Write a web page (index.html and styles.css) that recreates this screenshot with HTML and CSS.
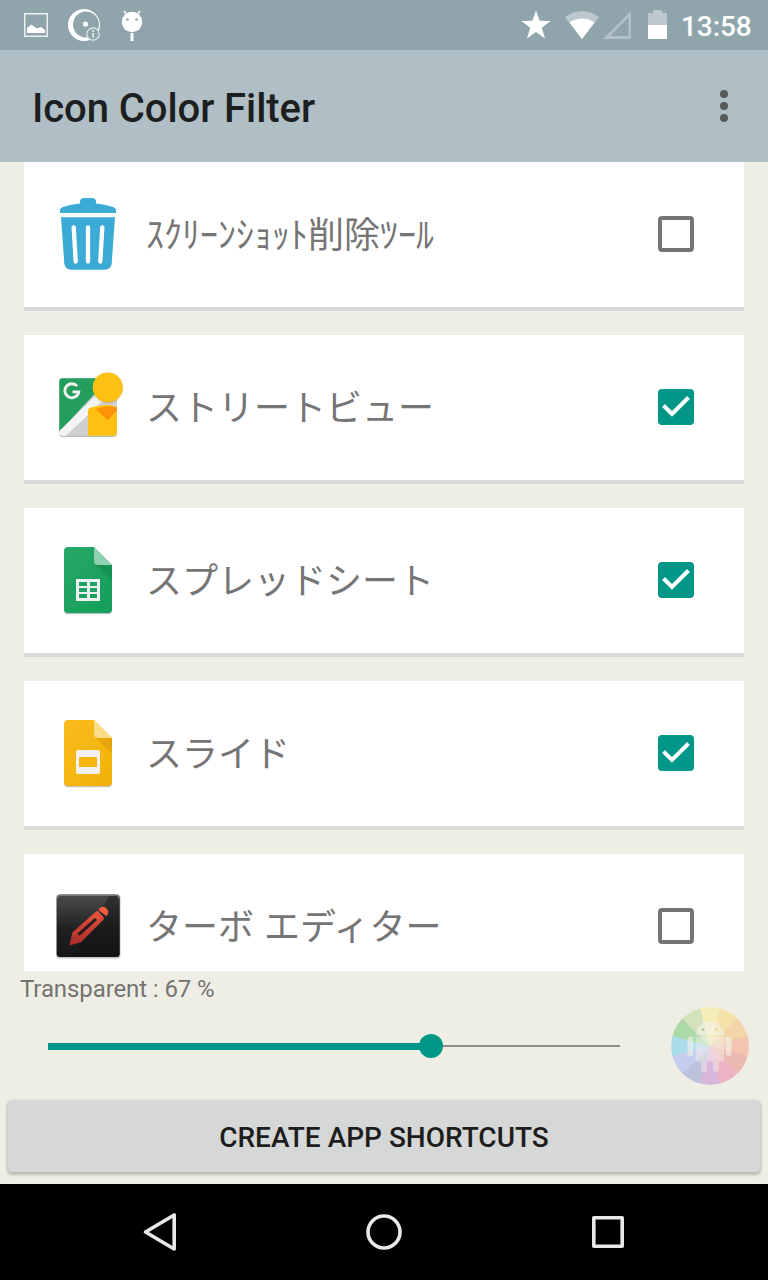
FILE: index.html
```html
<!DOCTYPE html>
<html lang="ja">
<head>
	<meta charset="utf-8"/>
	<title>Icon Color Filter</title>
	<link rel="stylesheet" href="styles.css">
</head>
<body>
	<div class="statusbar">
		<svg class="notifications" width="124" height="50" viewBox="24 0 124 50">
			<path d="M24.7 13.7h22.6v22.6H24.7z" fill="none" stroke="#eef1f2" stroke-width="1.5"/>
			<path d="M27 33v-5l4.500-3.500 4.500 3.500h2l3-1 4 3v3z" fill="#fff"/>
			<path fill-rule="evenodd" d="M84 9a16 16 0 1 0 0 32a16 16 0 1 0 0-32zM86 11.500a13 13 0 1 1 0 26a13 13 0 1 1 0-26z" fill="#fff"/>
			<circle cx="85.500" cy="24" r="2.600" fill="#fff"/>
			<circle cx="93" cy="34" r="6.200" fill="#90a4ac" stroke="#e3e8ea" stroke-width="1.200"/>
			<path d="M93 30v1.800M93 33v4.500" fill="none" stroke="#e3e8ea" stroke-width="1.800"/>
			<path d="M124 11l3 4M140 11l-3 4" stroke="#fff" stroke-width="1.500"/>
			<circle cx="132" cy="22" r="10.200" fill="#fff"/>
			<circle cx="127.500" cy="19.500" r="1.300" fill="#90a4ac"/>
			<circle cx="136.500" cy="19.500" r="1.300" fill="#90a4ac"/>
			<path d="M130.500 33h3v8h-3z" fill="#fff"/>
		</svg>
		<svg class="system" width="150" height="50" viewBox="520 0 150 50">
			<path d="M536 10.500l3.600 10.300 11.100.2-8.900 6.700 3.200 10.800-9-6.500-9 6.500 3.200-10.800-8.900-6.700 11.100-.2z" fill="#fff"/>
			<path d="M582 39L565 17q17-12 34 0z" fill="#bcc8cd"/>
			<path d="M582 39l-12.500-16.500q12.500-8 25 0z" fill="#fff"/>
			<path fill-rule="evenodd" d="M631 11v28h-28zM628.500 17.500L610 36h18.500z" fill="#b3c0c7"/>
			<path d="M653 10h9v3h5v12h-19V13h5z" fill="#bcc8cd"/>
			<path d="M648 25h19v14h-19z" fill="#fff"/>
		</svg>
		<span class="clock">13:58</span>
	</div>

	<div class="appbar">
		<h1>Icon Color Filter</h1>
		<svg width="8" height="32" viewBox="0 0 8 32" fill="#54595c">
			<circle cx="4" cy="4" r="4"/>
			<circle cx="4" cy="16" r="4"/>
			<circle cx="4" cy="28" r="4"/>
		</svg>
	</div>

	<div class="list">
		<div class="card">
			<svg class="icon" viewBox="0 0 72 72">
				<path d="M8 15v-3q0-2 3-3 8-3 17-3.500V4q0-4 4-4h8q4 0 4 4v1.500Q53 6 61 9q3 1 3 3v3z" fill="#3babd5"/>
				<path d="M9 19.300h54l-3.300 46q-.7 6.500-7.200 6.500h-33q-6.500 0-7.200-6.500z" fill="#3babd5"/>
				<path d="M21.700 29.500l2 34M36 29.500v34M50.300 29.500l-2 34" stroke="#fff" stroke-width="4.300" stroke-linecap="round"/>
			</svg>
			<span class="name">ｽｸﾘｰﾝｼｮｯﾄ削除ﾂｰﾙ</span>
			<span class="check"></span>
		</div>
		<div class="card">
			<svg class="icon" viewBox="0 0 72 72">
				<rect x="7.300" y="8.500" width="57.500" height="57.500" rx="3" fill="#bdbdbd"/>
				<rect x="7.300" y="7.300" width="57.500" height="57.500" rx="3" fill="#cfcfcf"/>
				<path d="M10.300 7.300H57L7.300 61V10.300q0-3 3-3z" fill="#239e5c"/>
				<path d="M51 17.500L7.300 60v2q0 2.800 3 2.800H14L57 24z" fill="#f3f3f3"/>
				<path d="M36 64.800V40q0-3 3-3.500 9-3 17-2.500 6 .5 8.800 2.500v25.300q0 3-3 3z" fill="#fec111"/>
				<path d="M43.500 38q12-4.500 21.300-1.500v3L56 49.300z" fill="#ff9209"/>
				<circle cx="56" cy="17" r="15.300" fill="#000" opacity=".15"/>
				<circle cx="55.700" cy="16.400" r="15" fill="#fec111"/>
				<path d="M25.200 15.200A7 7 0 1 0 26.800 20.800H20.500" fill="none" stroke="#f3f3f3" stroke-width="2.800"/>
			</svg>
			<span class="name">ストリートビュー</span>
			<span class="check checked"><svg viewBox="0 0 36 36"><path d="M5.500 16.500l8.500 8.500L30.500 8.500"/></svg></span>
		</div>
		<div class="card">
			<svg class="icon" viewBox="0 0 72 72">
				<defs>
					<linearGradient id="green" x1="0" y1="0" x2="1" y2="1">
						<stop offset="0" stop-color="#27a768"/>
						<stop offset="1" stop-color="#149e5b"/>
					</linearGradient>
				</defs>
				<rect x="12" y="30" width="48" height="40.200" rx="4" fill="#b9c5bf"/>
				<path d="M16 3h26l18 18v44q0 4-4 4H16q-4 0-4-4V7q0-4 4-4z" fill="url(#green)"/>
				<path d="M43.500 20.500L60 37V21z" fill="#138a50" opacity=".7"/>
				<path d="M42 3l18 18H46q-4 0-4-4z" fill="#8fd2b1"/>
				<path fill-rule="evenodd" d="M24 35h24v22H24zM27 38v4h8v-4zM38 38v4h7v-4zM27 44v4h8v-4zM38 44v4h7v-4zM27 50v4h8v-4zM38 50v4h7v-4z" fill="#f1f1f1"/>
			</svg>
			<span class="name">スプレッドシート</span>
			<span class="check checked"><svg viewBox="0 0 36 36"><path d="M5.500 16.500l8.500 8.500L30.500 8.500"/></svg></span>
		</div>
		<div class="card">
			<svg class="icon" viewBox="0 0 72 72">
				<defs>
					<linearGradient id="yellow" x1="0" y1="0" x2="1" y2="1">
						<stop offset="0" stop-color="#f8bc1d"/>
						<stop offset="1" stop-color="#f2b107"/>
					</linearGradient>
				</defs>
				<rect x="12" y="30" width="48" height="40.200" rx="4" fill="#c9c3b5"/>
				<path d="M16 3h26l18 18v44q0 4-4 4H16q-4 0-4-4V7q0-4 4-4z" fill="url(#yellow)"/>
				<path d="M43.500 20.500L60 37V21z" fill="#dd9c0a" opacity=".6"/>
				<path d="M42 3l18 18H46q-4 0-4-4z" fill="#fadc87"/>
				<path fill-rule="evenodd" d="M26 33h20q2 0 2 2v20q0 2-2 2H26q-2 0-2-2V35q0-2 2-2zM27 40v10h18V40z" fill="#f1f1f1"/>
			</svg>
			<span class="name">スライド</span>
			<span class="check checked"><svg viewBox="0 0 36 36"><path d="M5.500 16.500l8.500 8.500L30.500 8.500"/></svg></span>
		</div>
		<div class="card">
			<svg class="icon" viewBox="0 0 72 72">
				<defs>
					<linearGradient id="black" x1="0" y1="0" x2="0" y2="1">
						<stop offset="0" stop-color="#4b4c4e"/>
						<stop offset=".55" stop-color="#1f2021"/>
						<stop offset="1" stop-color="#151617"/>
					</linearGradient>
					<linearGradient id="red" x1="0" y1="0" x2="0" y2="1">
						<stop offset="0" stop-color="#e9553c"/>
						<stop offset="1" stop-color="#a82a2b"/>
					</linearGradient>
				</defs>
				<rect x="4" y="4.500" width="64.500" height="64" rx="4" fill="#c4c4c4"/>
				<rect x="4.700" y="4.500" width="63" height="62.500" rx="3.500" fill="url(#black)"/>
				<path d="M58 5h6.500q3 0 3 3v56q0 3-3 3H20z" fill="#111314" opacity=".45"/>
				<path d="M5.500 8.500q0-3.300 3.300-3.300h55q3.200 0 3.200 3.300" fill="none" stroke="#8b8c8e" stroke-width="1"/>
				<!-- pencil: body, slot, eraser -->
				<path d="M17.300 55.500l3-13L44 21.500q1.500-1.200 2.600.2l5 5.600q1 1.200-.2 2.500L29 52.300z" fill="url(#red)"/>
				<path d="M26.500 44.700L44 29" stroke="#241c1d" stroke-width="3"/>
				<path d="M47 18.500q3.500-3.300 7-.5 3.600 3 1.500 7-1 1.300-2.200.5l-6.300-5q-1-1 0-2z" fill="#f75b3e"/>
			</svg>
			<span class="name wide">ターボ エディター</span>
			<span class="check"></span>
		</div>
	</div>

	<div class="controls">
		<div class="opacity">
			<p class="label">Transparent : 67 %</p>
			<div class="slider">
				<div class="fill" style="width:67%"></div>
				<div class="thumb"></div>
				<div class="rest"></div>
			</div>
		</div>
		<div class="wheel">
			<svg viewBox="0 0 78 78">
				<circle class="glow" cx="39" cy="39" r="15"/>
				<g fill="#f3f3ea" fill-opacity=".6">
					<path d="M25 28a14 13.500 0 0 1 28 0z"/>
					<rect x="16.500" y="29.500" width="6" height="19.500" rx="3"/>
					<rect x="54.500" y="29.500" width="6" height="19.500" rx="3"/>
				</g>
				<path d="M24.500 29.500h28.500V53q0 1.500-1.500 1.500H48V62q0 3-3 3t-3-3v-7.500h-6V62q0 3-3 3t-3-3v-7.500h-4q-1.500 0-1.500-1.500z" fill="#f6f4ee" fill-opacity=".42"/>
				<path d="M30 13l3 5M48 13l-3 5" stroke="#f3f3ea" stroke-opacity=".6"/>
				<circle cx="32" cy="22.500" r="1.500" fill="#b9cf9d"/>
				<circle cx="45.500" cy="22.500" r="1.500" fill="#ead98f"/>
			</svg>
		</div>
	</div>

	<button class="create">CREATE APP SHORTCUTS</button>

	<div class="navbar">
		<svg width="482" height="40" viewBox="143 1212 482 40" fill="none" stroke="#e8e8e8" stroke-width="3.600" stroke-linejoin="round">
			<path d="M174.200 1215v34L145.500 1232z"/>
			<circle cx="384" cy="1232" r="16"/>
			<path d="M593.800 1217.800h28.400v28.400h-28.400z"/>
		</svg>
	</div>
</body>
</html>
```

FILE: styles.css
```css
* {
	box-sizing:border-box;
}
body {
	margin:0;
	width:768px;
	height:1280px;
	overflow:hidden;
	display:flex;
	flex-direction:column;
	background-color:#efeee5;
	font-family:Roboto, "Noto Sans CJK JP", sans-serif;
}
.statusbar {
	height:50px;
	display:flex;
	align-items:center;
	padding:0 16px 0 24px;
	background-color:#90a4ac;
}
.statusbar .system {
	margin-left:auto;
}
.clock {
	width:71px;
	margin-left:11px;
	padding-top:3px;
	color:#fff;
	font-size:28px;
	font-weight:500;
	line-height:32px;
	letter-spacing:-0.1px;
}
.appbar {
	height:112px;
	display:flex;
	align-items:center;
	justify-content:space-between;
	padding:0 40px 0 32px;
	background-color:#b0bec5;
}
.appbar h1 {
	margin:4px 0 0;
	color:#1c1e1f;
	font-size:40px;
	font-weight:500;
	letter-spacing:-0.07px;
}
.list {
	height:809px;
	overflow:hidden;
	display:flex;
	flex-direction:column;
	gap:24px;
	padding:0 24px;
}
.card {
	flex:none;
	height:149px;
	display:flex;
	align-items:center;
	padding:0 50px 1px 28px;
	background-color:#fff;
	border-bottom:4px solid #dadadb;
}
.icon {
	width:72px;
	height:72px;
	margin-right:22px;
}
.name {
	flex:1;
	padding-bottom:5px;
	color:#757575;
	font-family:"Noto Sans CJK JP", sans-serif;
	font-size:36px;
	line-height:52px;
}
.wide {
	word-spacing:2px;
}
.check {
	width:36px;
	height:36px;
	border:4px solid #757575;
	border-radius:4px;
}
.checked {
	border:0;
	background-color:#009688;
}
.checked svg {
	display:block;
	fill:none;
	stroke:#fff;
	stroke-width:4;
}
.controls {
	height:129px;
	display:flex;
}
.opacity {
	width:671px;
}
.label {
	margin:4px 0 0 20px;
	color:#74746f;
	font-size:24px;
	line-height:28px;
	letter-spacing:-0.1px;
}
.slider {
	display:flex;
	align-items:center;
	width:572px;
	height:24px;
	margin:31px 0 0 48px;
}
.fill {
	height:7px;
	background-color:#009688;
}
.thumb {
	flex:none;
	width:24px;
	height:24px;
	margin:0 -12px;
	border-radius:50%;
	background-color:#009688;
}
.rest {
	flex:1;
	height:2px;
	margin-left:12px;
	background-color:#8f8f89;
}
.wheel {
	width:78px;
	height:78px;
	margin-top:36px;
	border-radius:50%;
	background:conic-gradient(from -15deg, #f4edb8 0 30deg, #f4e2a9 0 60deg, #f2d5a9 0 90deg, #f3c5b1 0 120deg, #eab9b0 0 150deg, #eeb3c4 0 180deg, #d9b7da 0 210deg, #bcc2db 0 240deg, #c6ceee 0 270deg, #abdce9 0 300deg, #abd9a8 0 330deg, #d2e3ba 0);
}
.wheel svg {
	display:block;
}
.glow {
	fill:#fff;
	fill-opacity:.12;
}
.create {
	height:72px;
	margin:0 8px 12px;
	padding:2px 0 0;
	border:0;
	border-radius:4px;
	background-color:#d6d7d7;
	box-shadow:0 2px 3px 1px rgba(0,0,0,.22);
	color:#1d1d1d;
	font-family:Roboto, sans-serif;
	font-size:28px;
	font-weight:500;
}
.navbar {
	height:96px;
	display:flex;
	align-items:center;
	padding-left:143px;
	background-color:#000;
}
```
